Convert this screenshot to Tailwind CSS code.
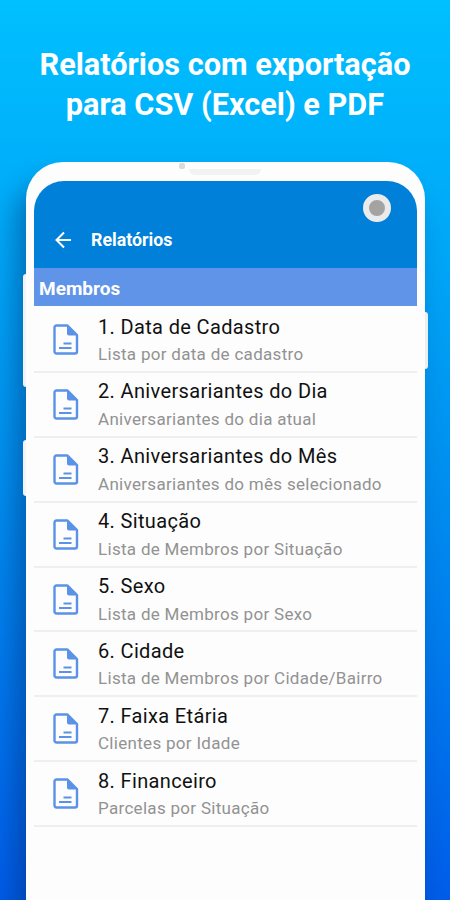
<!DOCTYPE html>
<html lang="pt-BR">
<head>
  <meta charset="UTF-8" />
  <meta name="viewport" content="width=device-width, initial-scale=1.0" />
  <title>Relatórios</title>
  <script src="https://cdn.jsdelivr.net/npm/@tailwindcss/browser@4"></script>
</head>
<body class="font-[Roboto,sans-serif]">
  <div class="w-[450px] h-[900px] overflow-hidden flex flex-col items-center bg-linear-to-b from-[#00c0ff] via-[#0092f0] to-[#005ce8]">
    <h1 class="h-[162px] shrink-0 pt-[45px] text-[30.7px] leading-[40px] font-bold text-white text-center whitespace-nowrap">Relatórios com exportação<br />para CSV (Excel) e PDF</h1>

    <!-- Phone -->
    <div class="relative ml-px w-[399px] h-[800px] shrink-0 px-2 pt-[19px] bg-[#fdfdfd] rounded-t-[37px] shadow-[-10px_20px_26px_rgba(0,30,90,0.4)]">
      <div class="absolute -left-[3px] top-[112px] w-[3px] h-[113px] rounded-l-sm bg-[#f1f3f5]"></div>
      <div class="absolute -left-[3px] top-[278px] w-[3px] h-[56px] rounded-l-sm bg-[#f1f3f5]"></div>
      <div class="absolute -right-[3px] top-[150px] w-[3px] h-[57px] rounded-r-sm bg-[#eceef0]"></div>
      <div class="absolute left-[153px] top-[1px] size-[6px] rounded-xs bg-[#d8dcdc]"></div>
      <div class="absolute left-[163px] top-[7px] w-[72px] h-[6px] rounded-b-md bg-[#f1f2f2]"></div>

      <header class="relative h-[87px] rounded-t-[30px] bg-[#0080d9] flex items-end pb-[18px] pl-[21px] text-white">
        <svg class="w-4 h-5" viewBox="0 0 16 20" fill="none" stroke="currentColor" stroke-width="2">
          <path d="M16.500 10H1.500M9 2.500L1.500 10L9 17.500" />
        </svg>
        <h2 class="ml-5 text-[17.8px] leading-5 font-bold">Relatórios</h2>
        <div class="absolute right-[26px] top-[13px] size-7 rounded-full border-[6px] border-[#ebebeb] bg-[#a3a3a3]"></div>
      </header>

      <h3 class="h-[38px] mb-[2px] pl-[5px] bg-[#6094e8] text-white text-[19px] leading-[41px] font-bold">Membros</h3>
      <ul id="reports"></ul>
    </div>
  </div>

  <script>
    const reports = [
      ['Data de Cadastro', 'Lista por data de cadastro'],
      ['Aniversariantes do Dia', 'Aniversariantes do dia atual'],
      ['Aniversariantes do Mês', 'Aniversariantes do mês selecionado'],
      ['Situação', 'Lista de Membros por Situação'],
      ['Sexo', 'Lista de Membros por Sexo'],
      ['Cidade', 'Lista de Membros por Cidade/Bairro'],
      ['Faixa Etária', 'Clientes por Idade'],
      ['Financeiro', 'Parcelas por Situação']
    ];

    document.getElementById('reports').innerHTML = reports.map(([title, text], i) => `
      <li class="h-[64.9px] flex border-b-2 border-[#efefef]">
        <svg class="mt-4 ml-[19px] w-[26px] h-[31px] shrink-0" viewBox="0 0 26 31" fill="none">
          <path d="M3.500 1.500H14.500L24 11V27.500A2 2 0 0 1 22 29.500H3.500A2 2 0 0 1 1.500 27.500V3.500A2 2 0 0 1 3.500 1.500Z" stroke="#5a92e8" stroke-width="2.400" stroke-linejoin="round" />
          <path d="M14 1V9.500A2 2 0 0 0 16 11.500H24.500Z" fill="#5a92e8" />
          <path d="M10.500 19.500H18.500M6 24H18.500" stroke="#5a92e8" stroke-width="1.800" />
        </svg>
        <div class="ml-[19px] pt-[5.6px] whitespace-nowrap">
          <p class="text-[20px] leading-[26px] tracking-[0.35px] text-[#111]">${i + 1}. ${title}</p>
          <p class="mt-[0.4px] text-[17px] leading-[28px] tracking-[0.3px] text-[#929292]">${text}</p>
        </div>
      </li>`).join('');
  </script>
</body>
</html>
